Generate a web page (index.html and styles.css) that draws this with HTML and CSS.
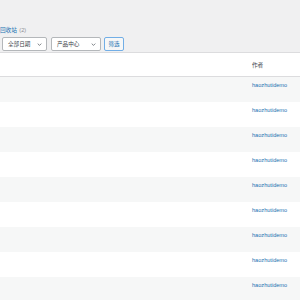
FILE: index.html
```html
<!DOCTYPE html>
<html lang="zh">
<head>
<meta charset="utf-8">
<link rel="stylesheet" href="styles.css">
</head>
<body>
<div class="wrap">
  <ul class="subsubsub"><li><a class="link" href="#">回收站</a> <span class="count">(2)</span></li></ul>
  <div class="tablenav">
    <div class="select sel-date"><span>全部日期</span><svg class="chev" viewBox="0 0 8 5" width="5" height="3"><path d="M1 1l3 3 3-3" fill="none" stroke="#50575e" stroke-width="1.2"/></svg></div>
    <div class="select sel-cat"><span>产品中心</span><svg class="chev" viewBox="0 0 8 5" width="5" height="3"><path d="M1 1l3 3 3-3" fill="none" stroke="#50575e" stroke-width="1.2"/></svg></div>
    <button class="btn">筛选</button>
  </div>
</div>
<table class="list">
  <thead><tr><th class="c-main"></th><th class="c-author">作者</th></tr></thead>
  <tbody>
    <tr class="alt"><td></td><td><a class="link" href="#">haozhutidemo</a></td></tr>
    <tr><td></td><td><a class="link" href="#">haozhutidemo</a></td></tr>
    <tr class="alt"><td></td><td><a class="link" href="#">haozhutidemo</a></td></tr>
    <tr><td></td><td><a class="link" href="#">haozhutidemo</a></td></tr>
    <tr class="alt"><td></td><td><a class="link" href="#">haozhutidemo</a></td></tr>
    <tr><td></td><td><a class="link" href="#">haozhutidemo</a></td></tr>
    <tr class="alt"><td></td><td><a class="link" href="#">haozhutidemo</a></td></tr>
    <tr><td></td><td><a class="link" href="#">haozhutidemo</a></td></tr>
    <tr class="alt"><td></td><td><a class="link" href="#">haozhutidemo</a></td></tr>
  </tbody>
</table>
</body>
</html>
```
FILE: styles.css
```css
html, body {
  margin: 0;
  padding: 0;
  background: #f0f0f1;
  font-family: "Liberation Sans", "Noto Sans CJK SC", sans-serif;
  font-size: 5.6px;
  color: #3c434a;
}
.wrap {
  padding: 27px 0 0 0;
  height: 25px;
}
.subsubsub {
  list-style: none;
  margin: 0;
  padding: 0;
  line-height: 6px;
  height: 6px;
}
.link {
  color: #2271b1;
  text-decoration: none;
}
.count {
  color: #8c8f94;
  margin-left: 1px;
}
.tablenav {
  display: flex;
  gap: 4px;
  margin-top: 4px;
  padding-left: 2px;
  height: 14px;
}
.select {
  box-sizing: border-box;
  height: 14px;
  background: #fff;
  border: 1px solid #b4b7ba;
  border-radius: 2px;
  display: flex;
  align-items: center;
  justify-content: space-between;
  padding: 0 4px 0 5px;
  color: #3c434a;
}
.sel-date { width: 45px; }
.sel-cat { width: 50px; }
.chev { display: block; }
.btn {
  box-sizing: border-box;
  height: 14px;
  width: 20px;
  padding: 0;
  margin-left: -1px;
  background: #f6f7f7;
  border: 1px solid #72aee6;
  border-radius: 2px;
  color: #2271b1;
  font-family: inherit;
  font-size: 5.6px;
}
.list {
  width: 100%;
  border-collapse: collapse;
  background: #fff;
  border-top: 1px solid #dcdcde;
  table-layout: fixed;
}
.list th {
  height: 23px;
  padding: 0;
  text-align: left;
  font-weight: normal;
  color: #3c434a;
  border-bottom: 1px solid #dcdcde;
  vertical-align: middle;
}
.c-author { width: 48px; }
.list td {
  height: 25px;
  padding: 5px 0 0 0;
  box-sizing: border-box;
  vertical-align: top;
  line-height: 6px;
}
.list tr.alt td { background: #f6f7f7; }
```
